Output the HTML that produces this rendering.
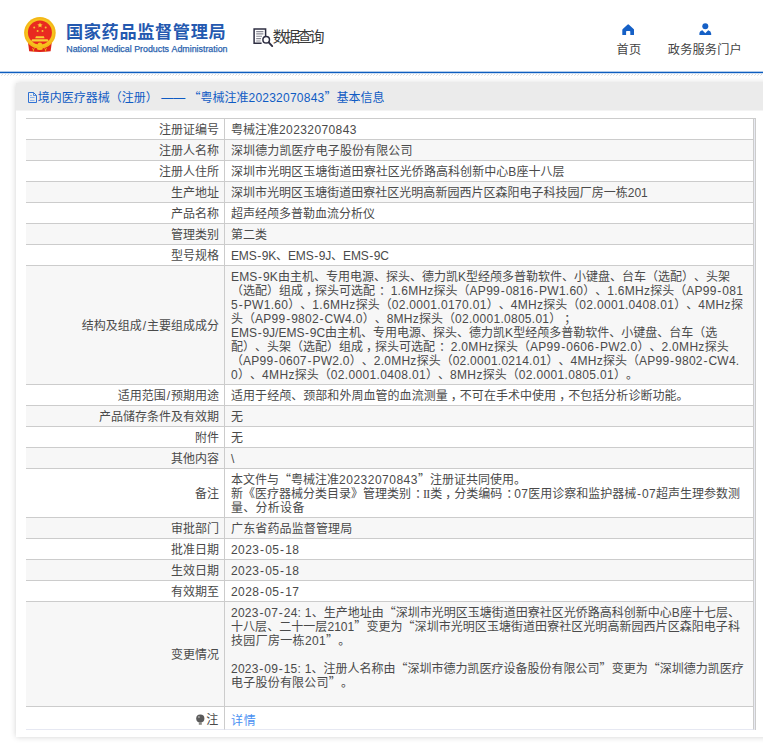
<!DOCTYPE html>
<html lang="zh-CN">
<head>
<meta charset="utf-8">
<title>国家药品监督管理局 数据查询</title>
<style>
html,body{margin:0;padding:0;background:#fff;}
body{width:763px;height:747px;overflow:hidden;position:relative;
  font-family:"Liberation Sans","Noto Sans CJK SC",sans-serif;font-size:12px;color:#333;text-spacing-trim:space-all;font-kerning:none;}
.hdr{position:absolute;left:0;top:0;width:763px;height:74px;background:#fff;}
.bl{position:absolute;left:0;top:71px;width:763px;height:3px;background:linear-gradient(rgba(13,93,191,.32) 0,rgba(13,93,191,.32) 1px,#0d5dbf 1px,#0d5dbf 2px,rgba(13,93,191,.2) 2px,rgba(13,93,191,.2) 3px);}
.hatch{position:absolute;left:0;top:74px;width:763px;height:2px;
  background:linear-gradient(90deg,transparent 2px,#dadada 2px,#dadada 3px) 0 0/3px 1px repeat-x,
  linear-gradient(90deg,transparent 1px,#e6e6e6 1px,#e6e6e6 2px,transparent 2px) 0 1px/3px 1px repeat-x;}
.logo{position:absolute;left:22px;top:15px;width:37px;height:40px;}
.cn{position:absolute;left:66px;top:19.7px;font-size:17.2px;font-weight:bold;color:#2459b0;letter-spacing:0.62px;white-space:nowrap;line-height:24px;}
.en{position:absolute;left:66.3px;top:44.2px;font-size:8.85px;color:#2a62ae;-webkit-text-stroke:0.25px #2a62ae;white-space:nowrap;line-height:10px;}
.dq{position:absolute;left:253px;top:26px;height:22px;white-space:nowrap;}
.dq svg{position:absolute;left:0;top:2px;}
.dq span{position:absolute;left:19.8px;top:-0.3px;font-size:15px;line-height:22px;color:#3a3a3a;letter-spacing:-2.75px;}
.nav{position:absolute;top:41.6px;font-size:12.2px;color:#444;line-height:16px;white-space:nowrap;letter-spacing:0.15px;}
.ic{position:absolute;}
.panel{position:absolute;left:16px;top:83px;width:760px;height:654px;background:#fff;box-shadow:0 0 6px rgba(0,0,0,.18);}
.ph{position:relative;height:28px;background:linear-gradient(#ebebeb 0,#ebebeb 27px,#f4f4f4 27px,#f4f4f4 28px);color:#0f5bc4;line-height:30px;padding-left:21.8px;font-size:12px;white-space:nowrap;}
.ph svg{position:absolute;left:11px;top:8px;}
table{position:absolute;left:10px;top:35px;width:728px;border-collapse:separate;border-spacing:0;table-layout:fixed;}
td{border-top:1px solid #ccc;border-right:1px solid #ccc;padding:4px 6px 2px;line-height:14px;font-size:12px;vertical-align:middle;color:#4a4a4a;}
td.l{width:187px;text-align:right;padding-right:5px;}
.sl{margin:0 0.9px;}
td.v{width:516px;box-shadow:1px 0 0 #e8eaf2,2px 0 0 #ccc;}
tr.g td{background:#f7f7f7;}
.cr{position:absolute;left:738px;top:35px;width:2px;height:1px;background:#ccc;}
tr.last td{border-bottom:1px solid #e6e8f2;height:16px;}
tr.last td.l{padding:5px 5.7px 1px 6px;}
tr.last td.v{padding:6px 6px 0 6px;letter-spacing:0.8px;}
.bulb{vertical-align:-2px;margin-right:1.3px;}
a{color:#4a90f2;text-decoration:none;}
.h{margin:0 0.7px;}
.p{position:relative;left:3px;}
.p.c{left:4px;}
.rn{font-family:"Liberation Serif",serif;letter-spacing:-0.9px;margin-right:0.9px;}
.q{font-family:"Noto Sans CJK SC",sans-serif;line-height:0;}
</style>
</head>
<body>
<div class="hdr">
  <svg class="logo" viewBox="22 15 37 40">
    <path d="M28 42.5L29.2 51.2Q39.9 52.6 50.6 51.2L51.8 42.5Z" fill="#e02418"/>
    <circle cx="39.9" cy="32.8" r="15.8" fill="#f6c21c"/>
    <circle cx="39.9" cy="32.8" r="14.9" fill="none" stroke="#f0a81a" stroke-width="0.6"/>
    <circle cx="39.9" cy="32.6" r="12" fill="#e92a20"/>
    <path d="M35.2 38.2L36 36.2H43.8L44.6 38.2ZM31 41.5L32.2 39.2H47.6L48.9 41.5Z" fill="#f8d034"/>
    <path d="M40 22.6l.75 1.75 1.9.15-1.45 1.25.45 1.85L40 26.6l-1.65 1 .45-1.85-1.45-1.25 1.9-.15z" fill="#f8d034"/>
    <g fill="#f4c030"><circle cx="34.2" cy="27.6" r="1"/><circle cx="45.7" cy="27.6" r="1"/><circle cx="37.6" cy="31.1" r="1"/><circle cx="42.5" cy="31.1" r="1"/></g>
    <circle cx="39.9" cy="44.7" r="2.3" fill="#f6c21c"/>
    <ellipse cx="39.9" cy="48.7" rx="3" ry="1.3" fill="#f6c21c"/>
    <path d="M32.4 48.3l1 1.6 1-1.6M33.4 49.9v1.8M44.6 48.3l1 1.6 1-1.6M45.6 49.9v1.8" stroke="#f6c21c" stroke-width="0.8" fill="none"/>
  </svg>
  <div class="cn">国家药品监督管理局</div>
  <div class="en">National Medical Products Administration</div>
  <div class="dq"><svg width="21" height="20" viewBox="0 0 21 20"><path d="M12.6 8.2V1.1H1.1V15.3H8.6" fill="none" stroke="#2e2e42" stroke-width="1.5"/><path d="M3.2 3.6H10.4M3.2 5.9H10.4M3.2 8.3H9M3.2 10.6H8M3.2 13H7.6" stroke="#8a8a96" stroke-width="1.1"/><circle cx="13.2" cy="11.8" r="3.3" fill="#fff" stroke="#2e2e42" stroke-width="1.5"/><path d="M15.7 14.4L19.2 18.1" stroke="#2e2e42" stroke-width="1.9" stroke-linecap="round"/></svg><span>数据查询</span></div>
  <svg class="ic" style="left:622px;top:23.5px" width="12.4" height="11.4" viewBox="0 0 12.4 11.4"><path d="M6.2 0.3Q6.6 0.3 7 0.7L11.6 4.9Q12.1 5.4 12.1 6V10.4Q12.1 11.1 11.4 11.1H8.3V7.6Q8.3 6.9 7.6 6.9H4.8Q4.1 6.9 4.1 7.6V11.1H1Q0.3 11.1 0.3 10.4V6Q0.3 5.4 0.8 4.9L5.4 0.7Q5.8 0.3 6.2 0.3Z" fill="#1560c6"/></svg>
  <div class="nav" style="left:616.6px;">首页</div>
  <svg class="ic" style="left:699px;top:22.5px" width="12.6" height="12.8" viewBox="0 0 12.6 12.8"><circle cx="6.3" cy="3.3" r="3" fill="#1560c6"/><path d="M0.4 12.5V10.6Q0.4 8.2 3.4 7.3L6.3 10.2L9.2 7.3Q12.2 8.2 12.2 10.6V12.5Z" fill="#1560c6"/></svg>
  <div class="nav" style="left:667.8px;">政务服务门户</div>
</div>
<div class="bl"></div>
<div class="hatch"></div>
<div class="panel">
  <div class="ph"><svg width="11" height="13" viewBox="0 0 11 13"><path d="M1.5 1.5H6.5L9.5 4.5V11.5H1.5Z" fill="none" stroke="#2f72d4" stroke-width="1"/><path d="M6.5 1.5V4.5H9.5" fill="none" stroke="#2f72d4" stroke-width="0.8"/><path d="M3 4.5H5M3 6.5H7.5M3 9.5H7.5" stroke="#8fb2e8" stroke-width="1"/></svg>境内医疗器械（注册） —— <span class="q">“</span>粤械注准<span style="letter-spacing:0.23px">20232070843</span><span class="q">”</span>基本信息</div>
  <table>
    <tr><td class="l">注册证编号</td><td class="v">粤械注准<span class="e" style="letter-spacing:0.400px">20232070843</span></td></tr>
    <tr class="g"><td class="l">注册人名称</td><td class="v"><span style="letter-spacing:0.100px">深圳德力凯医疗电子股份有限公司</span></td></tr>
    <tr><td class="l">注册人住所</td><td class="v"><span style="letter-spacing:0.058px">深圳市光明区玉塘街道田寮社区光侨路高科创新中心B座十八层</span></td></tr>
    <tr class="g"><td class="l">生产地址</td><td class="v"><span style="letter-spacing:0.022px">深圳市光明区玉塘街道田寮社区光明高新园西片区森阳电子科技园厂房一栋201</span></td></tr>
    <tr><td class="l">产品名称</td><td class="v">超声经颅多普勒血流分析仪</td></tr>
    <tr class="g"><td class="l">管理类别</td><td class="v">第二类</td></tr>
    <tr><td class="l">型号规格</td><td class="v"><span class="e" style="letter-spacing:-0.176px">EMS<span class="h">-</span>9K</span>、<span class="e" style="letter-spacing:-0.176px">EMS<span class="h">-</span>9J</span>、<span class="e" style="letter-spacing:-0.176px">EMS<span class="h">-</span>9C</span></td></tr>
    <tr class="g"><td class="l">结构及组成<span class="sl">/</span>主要组成成分</td><td class="v"><span class="e" style="letter-spacing:0.134px">EMS<span class="h">-</span>9K</span>由主机、专用电源、探头、德力凯<span class="e" style="letter-spacing:0.134px">K</span>型经颅多普勒软件、小键盘、台车（选配）、头架<br>（选配）组成<span class="p">，</span>探头可选配<span class="p c">：</span><span class="e" style="letter-spacing:0.262px"> 1.6MHz</span>探头（<span class="e" style="letter-spacing:0.262px">AP99<span class="h">-</span>0816<span class="h">-</span>PW1.60</span>）、<span class="e" style="letter-spacing:0.262px">1.6MHz</span>探头（<span class="e" style="letter-spacing:0.262px">AP99<span class="h">-</span>081</span><br><span class="e" style="letter-spacing:0.325px">5<span class="h">-</span>PW1.60</span>）、<span class="e" style="letter-spacing:0.325px">1.6MHz</span>探头（<span class="e" style="letter-spacing:0.325px">02.0001.0170.01</span>）、<span class="e" style="letter-spacing:0.325px">4MHz</span>探头（<span class="e" style="letter-spacing:0.325px">02.0001.0408.01</span>）、<span class="e" style="letter-spacing:0.325px">4MHz</span>探<br>头（<span class="e" style="letter-spacing:0.273px">AP99<span class="h">-</span>9802<span class="h">-</span>CW4.0</span>）、<span class="e" style="letter-spacing:0.273px">8MHz</span>探头（<span class="e" style="letter-spacing:0.273px">02.0001.0805.01</span>）<span class="p">；</span><br>EMS<span class="h">-</span>9J/EMS<span class="h">-</span>9C由主机、专用电源、探头、德力凯K型经颅多普勒软件、小键盘、台车（选<br>配）、头架（选配）组成<span class="p">，</span>探头可选配<span class="p c">：</span><span class="e" style="letter-spacing:0.311px"> 2.0MHz</span>探头（<span class="e" style="letter-spacing:0.311px">AP99<span class="h">-</span>0606<span class="h">-</span>PW2.0</span>）、<span class="e" style="letter-spacing:0.311px">2.0MHz</span>探头<br>（<span class="e" style="letter-spacing:0.256px">AP99<span class="h">-</span>0607<span class="h">-</span>PW2.0</span>）、<span class="e" style="letter-spacing:0.256px">2.0MHz</span>探头（<span class="e" style="letter-spacing:0.256px">02.0001.0214.01</span>）、<span class="e" style="letter-spacing:0.256px">4MHz</span>探头（<span class="e" style="letter-spacing:0.256px">AP99<span class="h">-</span>9802<span class="h">-</span>CW4.</span><br><span class="e" style="letter-spacing:0.342px">0</span>）、<span class="e" style="letter-spacing:0.342px">4MHz</span>探头（<span class="e" style="letter-spacing:0.342px">02.0001.0408.01</span>）、<span class="e" style="letter-spacing:0.342px">8MHz</span>探头（<span class="e" style="letter-spacing:0.342px">02.0001.0805.01</span>）。</td></tr>
    <tr><td class="l">适用范围<span class="sl">/</span>预期用途</td><td class="v"><span style="letter-spacing:0.042px">适用于经颅、颈部和外周血管的血流测量<span class="p">，</span>不可在手术中使用<span class="p">，</span>不包括分析诊断功能。</span></td></tr>
    <tr class="g"><td class="l">产品储存条件及有效期</td><td class="v">无</td></tr>
    <tr><td class="l">附件</td><td class="v">无</td></tr>
    <tr class="g"><td class="l">其他内容</td><td class="v">\</td></tr>
    <tr><td class="l">备注</td><td class="v">本文件与<span class="q">“</span>粤械注准<span class="e" style="letter-spacing:0.500px">20232070843</span><span class="q">”</span>注册证共同使用。<br>新《医疗器械分类目录》管理类别<span class="p c">：</span><span class="rn">II</span>类<span class="p">，</span>分类编码<span class="p c">：</span><span class="e" style="letter-spacing:0.350px">07</span>医用诊察和监护器械<span class="e" style="letter-spacing:0.350px"><span class="h">-</span>07</span>超声生理参数测<br><span style="letter-spacing:0.280px">量、分析设备</span></td></tr>
    <tr class="g"><td class="l">审批部门</td><td class="v"><span style="letter-spacing:0.132px">广东省药品监督管理局</span></td></tr>
    <tr><td class="l">批准日期</td><td class="v"><span class="e" style="letter-spacing:0.422px">2023<span class="h">-</span>05<span class="h">-</span>18</span></td></tr>
    <tr class="g"><td class="l">生效日期</td><td class="v"><span class="e" style="letter-spacing:0.422px">2023<span class="h">-</span>05<span class="h">-</span>18</span></td></tr>
    <tr><td class="l">有效期至</td><td class="v"><span class="e" style="letter-spacing:0.422px">2028<span class="h">-</span>05<span class="h">-</span>17</span></td></tr>
    <tr class="g"><td class="l">变更情况</td><td class="v"><span class="e" style="letter-spacing:0.247px">2023<span class="h">-</span>07<span class="h">-</span>24: 1</span>、生产地址由<span class="q">“</span>深圳市光明区玉塘街道田寮社区光侨路高科创新中心<span class="e" style="letter-spacing:0.247px">B</span>座十七层、<br><span style="letter-spacing:0.051px">十八层、二十一层2101<span class="q">”</span>变更为<span class="q">“</span>深圳市光明区玉塘街道田寮社区光明高新园西片区森阳电子科</span><br><span style="letter-spacing:0.320px">技园厂房一栋201<span class="q">”</span>。</span><br>&nbsp;<br><span class="e" style="letter-spacing:0.234px">2023<span class="h">-</span>09<span class="h">-</span>15: 1</span>、注册人名称由<span class="q">“</span>深圳市德力凯医疗设备股份有限公司<span class="q">”</span>变更为<span class="q">“</span>深圳德力凯医疗<br><span style="letter-spacing:0.222px">电子股份有限公司<span class="q">”</span>。</span><br>&nbsp;</td></tr>
    <tr class="last"><td class="l"><svg class="bulb" width="9" height="12" viewBox="0 0 9 12"><circle cx="4.3" cy="4.6" r="4.1" fill="#5a5a5a"/><rect x="2.8" y="8.4" width="3" height="2.4" fill="#8a8a86"/><circle cx="2.9" cy="3.1" r="1.1" fill="#9a9a9a"/></svg>注</td><td class="v"><a>详情</a></td></tr>
  </table>
  <div class="cr"></div>
</div>
</body>
</html>
